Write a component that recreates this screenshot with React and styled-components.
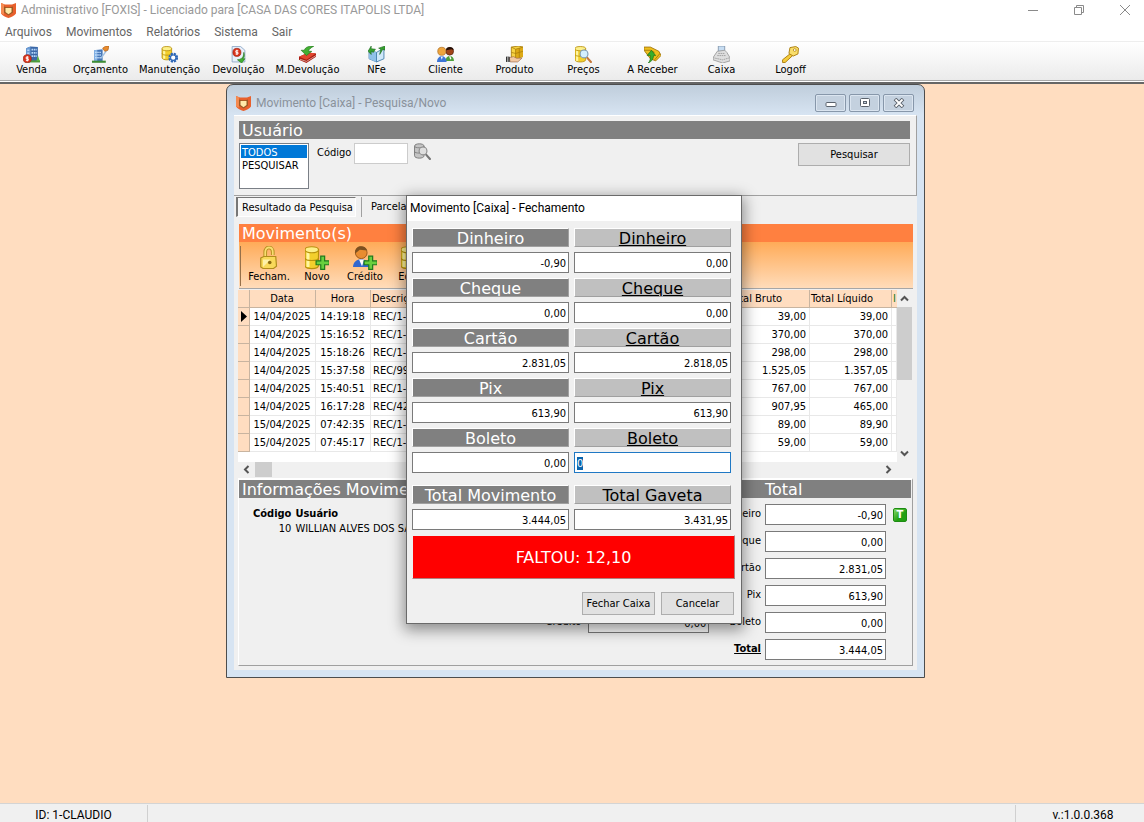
import React, { useEffect, useRef } from "react";
import styled, { createGlobalStyle, css } from "styled-components";

const Global = createGlobalStyle`
  *, *::before, *::after { box-sizing: border-box; }
  html, body { margin: 0; }
  body, button, input, select, table {
    font-family: "DejaVu Sans Condensed", "DejaVu Sans", sans-serif;
    font-stretch: condensed;
    font-size: 11px;
    line-height: 14px;
    color: #000;
  }
  button { padding: 0; margin: 0; border: 0; background: none; }
  svg { display: block; flex: none; }
`;

const segoe = css`
  font-family: Roboto, "Open Sans", sans-serif;
  font-stretch: normal;
  font-size: 12px;
  font-weight: 400;
`;

const verdana = css`
  font-family: "DejaVu Sans", sans-serif;
  font-stretch: normal;
  font-size: 16px;
  font-weight: 400;
`;

/* ---------- application frame ---------- */

const Frame = styled.div`
  min-height: 100vh;
  display: flex;
  flex-direction: column;
  background: #fff;
  overflow: hidden;
`;

const TitleBar = styled.header`
  display: flex;
  align-items: center;
  gap: 5px;
  height: 22px;
  padding: 0 12px 2px 1px;
`;

const AppTitle = styled.h1`
  ${segoe}
  flex: 1;
  margin: 0;
  line-height: 18px;
  color: #999;
  white-space: nowrap;
`;

const WindowButtons = styled.div`
  display: flex;
  gap: 32px;
`;

const PlainButton = styled.button`
  display: grid;
  place-items: center;
  width: 14px;
  height: 14px;
`;

const MenuBar = styled.nav`
  display: flex;
  gap: 14px;
  height: 19px;
  padding: 0 5px;
`;

const MenuItem = styled.button`
  ${segoe}
  line-height: 18px;
  color: #666;
`;

const Toolbar = styled.div`
  display: flex;
  height: 40px;
  padding-top: 4px;
  border-top: 1px solid #eee;
  border-bottom: 1px solid #aaa;
  background: linear-gradient(#fff, #ebebeb);
`;

const ToolbarItems = styled.div`
  display: flex;
  margin-left: -3px;
`;

const ToolButton = styled.button`
  display: flex;
  flex-direction: column;
  align-items: center;
  width: ${(p) => p.$width || 69}px;
  white-space: nowrap;
  line-height: 14px;
`;

const ToolbarEdge = styled.div`
  height: 3px;
  border-top: 1px solid #fff;
  border-bottom: 2px solid #666;
`;

const Desktop = styled.main`
  position: relative;
  flex: 1;
  min-height: 600px;
  background: #ffddc0;
`;

const StatusBar = styled.footer`
  display: flex;
  justify-content: space-between;
  height: 19px;
  border-top: 1px solid #d4d4d4;
  background: #f0f0f0;
`;

const StatusCell = styled.div`
  ${segoe}
  line-height: 20px;
  height: 17px;
  margin-top: 1px;
  text-align: center;
  width: ${(p) => p.$width}px;
  padding-left: ${(p) => (p.$end ? 6 : 0)}px;
  border: 0 solid #d0d0d0;
  border-width: ${(p) => (p.$end ? "0 0 0 1px" : "0 1px 0 0")};
`;

/* ---------- child window ---------- */

const ChildWindow = styled.section`
  position: absolute;
  left: 226px;
  top: 0;
  width: 699px;
  padding: 0 7px 7px;
  border: 1px solid #4d4d4d;
  border-radius: 7px 7px 0 0;
  background: linear-gradient(#bfcddb, #d7e4f2 30px);
`;

const ChildTitleBar = styled.div`
  display: flex;
  align-items: center;
  gap: 5px;
  height: 30px;
  padding: 6px 3px 0 2px;
`;

const ChildTitle = styled.h2`
  ${segoe}
  flex: 1;
  margin: 0;
  line-height: 18px;
  color: #8a929b;
`;

const ChildButtons = styled.div`
  display: flex;
  gap: 3px;
`;

const GlassButton = styled.button`
  display: grid;
  place-items: center;
  width: 31px;
  height: 18px;
  border: 1px solid #8797aa;
  border-radius: 2px;
  box-shadow: inset 0 0 0 1px #dbe5f0;
  background: #c4d1df;
`;

const ChildBody = styled.div`
  background: #f0f0f0;
  padding-bottom: 4px;
`;

const SearchPanel = styled.div`
  height: 81px;
  padding: 5px 6px 0 5px;
  border-top: 1px solid #fff;
  border-right: 1px solid #a0a0a0;
  border-bottom: 1px solid #a0a0a0;
`;

const SectionBar = styled.h3`
  ${verdana}
  flex: ${(p) => p.$flex || "none"};
  margin: 0;
  height: 18px;
  line-height: 19px;
  padding-left: ${(p) => p.$indent || 3}px;
  background: ${(p) => p.$color || "#808080"};
  color: #fff;
  white-space: nowrap;
  overflow: hidden;
`;

const SearchRow = styled.div`
  display: flex;
  align-items: flex-start;
  padding-top: 4px;
`;

const ListBox = styled.select`
  width: 70px;
  height: 46px;
  padding: 1px;
  border: 1px solid #7a7f86;
  border-radius: 0;
  background: #fff;
  overflow: hidden;
  outline: 0;
  option {
    height: 13px;
    min-height: 13px;
    padding: 1px 1px 0;
    line-height: 13px;
    color: #000;
  }
  option:checked {
    color: #fff;
    background: #0078d7 linear-gradient(#0078d7, #0078d7);
  }
`;

const FieldLabel = styled.label`
  padding: 3px 3px 0 8px;
`;

const CodeInput = styled.input`
  width: 54px;
  height: 21px;
  margin-right: 6px;
  border: 1px solid #ccc;
  background: #fff;
`;

const PushButton = styled.button`
  width: ${(p) => p.$width}px;
  height: 23px;
  padding-top: 1px;
  border: 1px solid #adadad;
  background: #e1e1e1;
  white-space: nowrap;
`;

const Spacer = styled.div`
  flex: 1;
`;

const Tabs = styled.div`
  display: flex;
  align-items: flex-start;
  height: 28px;
  padding: 1px 2px 0;
`;

const Tab = styled.button`
  height: 20px;
  padding: ${(p) => (p.$active ? "1px 2px 0 4px" : "0 0 0 9px")};
  margin-right: ${(p) => (p.$active ? 5 : 0)}px;
  border: solid;
  border-width: ${(p) => (p.$active ? "1px 1px 1px 2px" : "0 0 0 1px")};
  border-color: ${(p) => (p.$active ? "#777 #fff #fff #777" : "#a0a0a0")};
  background: ${(p) => (p.$active ? "#f7f7f7" : "none")};
`;

const MovesArea = styled.div`
  padding: 0 4px 0 5px;
`;

const OrangeToolbar = styled.div`
  display: flex;
  height: 47px;
  padding: 4px 0 0 1px;
  border-bottom: 1px solid #a6a6a6;
  background: linear-gradient(#ffab58, #ffdcba);
`;

const OrangeItems = styled.div`
  display: flex;
  padding-left: 4px;
  border-left: 1px solid #96704a;
  height: 40px;
`;

/* ---------- data grid ---------- */

const GridArea = styled.div`
  display: grid;
  grid-template-columns: 1fr 15px;
  padding: 1px 5px 0 4px;
`;

const GridView = styled.div`
  height: 172px;
  background: #fff;
  overflow: hidden;
`;

const DataTable = styled.table`
  width: 100%;
  table-layout: fixed;
  border-collapse: separate;
  border-spacing: 0;
  th {
    height: 18px;
    padding: 1px 1px 0;
    font-weight: 400;
    text-align: left;
    background: #ffddc0;
    border-right: 1px solid #c8b4a0;
    border-bottom: 1px solid #c8b4a0;
    white-space: nowrap;
    overflow: hidden;
  }
  th:last-child { color: #1c7a1c; border-right: 0; }
  td {
    height: 18px;
    padding: 1px 3px 0 2px;
    border-right: 1px solid #e8e8e8;
    border-bottom: 1px solid #e8e8e8;
    white-space: nowrap;
    overflow: hidden;
  }
  td:first-child {
    padding: 0 0 0 3px;
    background: #ffddc0;
    border-color: #c8b4a0;
  }
  th:nth-child(2), th:nth-child(3), td:nth-child(2), td:nth-child(3) {
    padding-left: 0;
    padding-right: 1px;
    text-align: center;
  }
  td:nth-child(5), td:nth-child(6) {
    text-align: right;
  }
`;

const ScrollTrack = styled.div`
  display: flex;
  flex-direction: ${(p) => (p.$vertical ? "column" : "row")};
  background: #f0f0f0;
`;

const ScrollArrow = styled.button`
  display: grid;
  place-items: center;
  width: ${(p) => (p.$vertical ? 15 : 17)}px;
  height: ${(p) => (p.$vertical ? 17 : 15)}px;
`;

const ScrollThumb = styled.div`
  width: ${(p) => (p.$vertical ? 15 : 17)}px;
  height: ${(p) => (p.$vertical ? 73 : 15)}px;
  background: #cdcdcd;
`;

/* ---------- information panel ---------- */

const InfoPanel = styled.div`
  margin: 1px 4px 0;
  border: 1px solid #fff;
  border-top-width: 2px;
  border-right-color: #a0a0a0;
  border-bottom-color: #a0a0a0;
`;

const InfoHeads = styled.div`
  display: flex;
  padding-right: 1px;
`;

const InfoBody = styled.div`
  display: flex;
  align-items: flex-start;
  padding: 6px 5px 5px 12px;
`;

const UserTable = styled.table`
  border-spacing: 0;
  margin-top: 3px;
  th, td { padding: 0 2px 1px; text-align: left; white-space: nowrap; }
  th { font-weight: 700; }
  td:first-child { text-align: right; }
`;

const FieldGrid = styled.div`
  display: grid;
  grid-template-columns: auto 121px;
  column-gap: ${(p) => p.$gap || 4}px;
  row-gap: 6px;
  align-self: ${(p) => p.$align || "auto"};
  margin-right: ${(p) => p.$after}px;
  margin-bottom: ${(p) => p.$below || 0}px;
  label { text-align: right; line-height: 20px; }
`;

const TotalLabel = styled.label`
  font-weight: 700;
  text-decoration: underline;
`;

const ValueInput = styled.input`
  width: 100%;
  height: 21px;
  padding: 1px 2px 0;
  border: 1px solid #7a7a7a;
  border-radius: 0;
  background: #fff;
  text-align: right;
  outline: 0;
  &:focus {
    border-color: #1f78c4;
    text-align: left;
  }
  &::selection {
    color: #fff;
    background: #0a64ad;
  }
`;

/* ---------- closing dialog ---------- */

const DialogBox = styled.section`
  position: absolute;
  left: 406px;
  top: 111px;
  width: 336px;
  border: 1px solid #6a6a6a;
  background: #f0f0f0;
  box-shadow: 0 4px 14px 2px rgba(0, 0, 0, 0.42);
`;

const DialogTitle = styled.h2`
  ${segoe}
  margin: 0;
  height: 25px;
  padding-left: 3px;
  background: #fff;
  line-height: 25px;
`;

const DialogBody = styled.div`
  padding: 7px 6px 8px 5px;
`;

const PairGrid = styled.div`
  display: grid;
  grid-template-columns: 157px 157px;
  gap: 5px;
  margin-bottom: ${(p) => p.$after}px;
`;

const HeadLabel = styled.label`
  ${verdana}
  line-height: 19px;
  height: 19px;
  text-align: center;
  overflow: hidden;
  border: 1px solid #fff;
  border-right-color: #a0a0a0;
  border-bottom-color: #a0a0a0;
  color: ${(p) => (p.$light ? "#000" : "#fff")};
  background: ${(p) => (p.$light ? "#c0c0c0" : "#808080")};
  text-decoration: ${(p) => (p.$underline ? "underline" : "none")};
`;

const Missing = styled.output`
  ${verdana}
  display: block;
  height: 44px;
  border: 1px solid #f0f0f0;
  border-right-color: #b08080;
  border-bottom-color: #b08080;
  background: #f00;
  color: #fff;
  text-align: center;
  line-height: 44px;
`;

const DialogActions = styled.div`
  display: flex;
  justify-content: flex-end;
  gap: 6px;
  padding: 13px 1px 0 0;
`;

/* ---------- drawings ---------- */

const Svg = ({ size = 17, children }) => (
  <svg width={size} height={size} viewBox="0 0 16 16" aria-hidden="true">
    {children}
  </svg>
);

const Logo = () => (
  <svg width="15" height="15" viewBox="0 0 15 15" aria-hidden="true">
    <path d="M0 0l4 1.500h7L15 0v10.500c-1.500 2-4.500 3.500-7.500 4.500C4.500 14 1.500 12.500 0 10.500z" fill="#e8602c" />
    <path d="M0 0l3 1.200v10.500L0 10.500z" fill="#f58a50" />
    <path d="M3 3.500l2.500.8h4l2.500-.8v6L7.500 12.500 3 9.500z" fill="#9a5a24" />
    <path d="M4.500 5h6v4l-3 2.200-3-2.200z" fill="#ffe9a8" />
  </svg>
);

const Cylinder = ({ x = 1, y = 0, w = 9, h = 13 }) => (
  <g stroke="#b8900c" strokeWidth=".8">
    <path d={`M${x} ${y + 2.5}v${h - 4.5}c0 2.700 ${w} 2.700 ${w} 0v-${h - 4.5}z`} fill="#f3cf2c" />
    <path d={`M${x + 2} ${y + 4}v${h - 5}`} stroke="#fff6a0" strokeWidth="2" />
    <ellipse cx={x + w / 2} cy={y + 2.5} rx={w / 2} ry="2" fill="#fdf08a" />
    <path d={`M${x} ${y + h / 2 + 0.5}c0 2.200 ${w} 2.200 ${w} 0`} fill="none" />
  </g>
);

const Building = () => (
  <g>
    <path d="M3 2l4-1.500L14 1v13H3z" fill="#3b68a8" />
    <path d="M3 2l4-1.500v14H3z" fill="#6b9bd4" />
    <path d="M4 4h2.500M4 7h2.500M4 10h2.500M8 3.500h5M8 6.500h5M8 9.500h5" stroke="#b5d6fa" strokeWidth="1.600" strokeDasharray="1.600 .6" />
    <path d="M2 14.500h14" stroke="#4d9b3a" strokeWidth="2" />
    <path d="M14 9l1.800 5h-3z" fill="#5cb33f" />
  </g>
);

const Coin = ({ x, y }) => (
  <g>
    <circle cx={x} cy={y} r="3.800" fill="#d9341c" stroke="#99200f" strokeWidth=".6" />
    <path d={`M${x + 1.3} ${y - 1.5}h-2.300v1.500h2v1.500h-2.300M${x} ${y - 2.5}v5`} stroke="#fff" strokeWidth=".9" fill="none" />
  </g>
);

const Plus = () => (
  <path d="M10.500 6.800h2.600v3.100H16.200v2.600h-3.100v3.100h-2.600v-3.100H7.400V9.900h3.100z" fill="#69cf3e" stroke="#1e7a1c" strokeWidth=".8" />
);

const Lens = ({ gray }) => (
  <g>
    <path d="M11 10.500l4 4.500" stroke={gray ? "#777" : "#c4783a"} strokeWidth="2" strokeLinecap="round" />
    <circle cx="8.500" cy="7.500" r="3.700" fill={gray ? "#dedede" : "#d3efff"} stroke={gray ? "#888" : "#7896b4"} />
  </g>
);

const icons = {
  venda: <><Building /><Coin x={4} y={12} /></>,
  orcamento: (
    <>
      <path d="M2 4l8-1v11H2z" fill="#4677b8" />
      <path d="M2 4l3-.4V14H2z" fill="#86b4e6" />
      <path d="M3 6h6M3 8.500h6M3 11h6" stroke="#cfe6ff" strokeWidth="1.300" strokeDasharray="1.300 .7" />
      <path d="M8 11l5-7 1 1-5 7z" fill="#9fc0e2" />
      <path d="M10 2l3-2h3l-1 4-3 1z" fill="#e88b2e" stroke="#a85a15" strokeWidth=".6" />
      <path d="M0 14.800h13" stroke="#3e8c35" strokeWidth="2" />
    </>
  ),
  manutencao: (
    <>
      <Cylinder x={1} />
      <circle cx="11.500" cy="11" r="3.500" fill="#eaf4ff" stroke="#2b65b5" strokeWidth="2.200" strokeDasharray="2 .75" />
      <circle cx="11.500" cy="11" r="2.500" fill="#fff" stroke="#2b65b5" />
    </>
  ),
  devolucao: (
    <>
      <path d="M2 .5h8l4 3.500v11H2z" fill="#e8f0fa" stroke="#8aa4c4" strokeWidth=".8" />
      <Coin x={6.5} y={6} />
      <path d="M13 6c1 4 0 5-1 6l2 0-3 4-4-3 2-.4c3-1 4-3 4-6.600z" fill="#42b032" stroke="#1f7518" strokeWidth=".6" />
    </>
  ),
  mdevolucao: (
    <>
      <path d="M0 10l9-4 7 1v3l-9 6-7-3z" fill="#a81a12" />
      <path d="M0 10l9-4 7 1-9 6z" fill="#e2462e" />
      <path d="M1 12.500l6 2 9-5.500" stroke="#e9c9b8" strokeWidth=".7" fill="none" />
      <path d="M14 0c-5 0-8 1-9 4H2l5 5 5-4H9c0-2 2-3 5-5z" fill="#42b032" stroke="#1f7518" strokeWidth=".6" />
    </>
  ),
  nfe: (
    <>
      <path d="M1 4l7 2 7-4v10l-7 3-7-3z" fill="#cfe8fa" stroke="#3c78a8" strokeWidth=".8" />
      <path d="M1 4l7 2v9l-7-3z" fill="#8fc1ea" />
      <path d="M8 6v9" stroke="#3c78a8" strokeWidth=".8" />
      <path d="M0 5l3-5v2.500l4 .5-2 3-2-1v3zM16 0v4l-2-1-3 5 1-5-2-1z" fill="#36a030" stroke="#176217" strokeWidth=".5" />
    </>
  ),
  cliente: (
    <>
      <circle cx="12" cy="5" r="3.600" fill="#a24418" stroke="#4a1c0a" strokeWidth=".6" />
      <path d="M8.500 4c0-4 7-4 7.200 0l-2-1z" fill="#241008" />
      <path d="M8 14c0-6 8-6 8 0z" fill="#4c9f3a" />
      <path d="M12 9.500l1 3" stroke="#fff" strokeWidth="1.200" />
      <circle cx="4.500" cy="5" r="3.800" fill="#eea53e" stroke="#a3651a" strokeWidth=".6" />
      <path d="M0 15c0-7 9-7 9 0z" fill="#3d76d6" />
      <path d="M3.500 10l1 3 1-3z" fill="#fff" />
    </>
  ),
  produto: (
    <>
      <path d="M5 1l7-1 4 1v9l-7 2-4-1z" fill="#f6d344" stroke="#a87c0a" strokeWidth=".8" />
      <path d="M9 3l7-2v9l-7 2z" fill="#dda915" />
      <path d="M5 1l4 2 7-2M9 3v9M5 6l4 1 7-2M12.500 2v9" stroke="#a87c0a" strokeWidth=".7" fill="none" />
      <path d="M3 11l4-1 3 1.500h5L11 15H4z" fill="#f3c9a3" stroke="#99674a" strokeWidth=".6" />
      <path d="M0 10h3.500v5H0z" fill="#333" />
      <path d="M1.700 10v5" stroke="#fff" strokeWidth=".7" />
    </>
  ),
  precos: <><Cylinder x={0} w={10} h={15} /><Lens /></>,
  areceber: (
    <>
      <path d="M0 1l6 0 8 4 2 4-5 5-5-2-6-8z" fill="#eebf1e" stroke="#a07409" strokeWidth=".8" />
      <path d="M0 4l6 0 4 2M3 8l6-2M10 13l5-6" stroke="#a07409" strokeWidth=".8" fill="none" />
      <path d="M7 4l4 5H9c0 3-2 6-5 7 2-2 2-4 2-7H3z" fill="#37ae2c" stroke="#176f12" strokeWidth=".6" />
    </>
  ),
  caixa: (
    <>
      <path d="M5 0h6v5H5z" fill="#c7ddf2" stroke="#7e93aa" strokeWidth=".8" />
      <path d="M4 5l7-1 2 2 3 5v3l-7 2-9-3v-2z" fill="#dedede" stroke="#999" strokeWidth=".8" />
      <path d="M0 11l9 2 7-2M5 7h6M4 9h8" stroke="#999" strokeWidth=".8" fill="none" strokeDasharray="1.500 .6" />
    </>
  ),
  logoff: (
    <>
      <path d="M8 7l2 2-7 6.500H.5V13z" fill="#f5cc3c" stroke="#ad8010" strokeWidth=".9" />
      <path d="M7.500 1.500L13 .5l2.500 1.500-.5 5.500L10.500 9.500 6.500 7z" fill="#f9de6a" stroke="#ad8010" strokeWidth=".9" />
      <circle cx="12" cy="3.800" r="1.300" fill="#fff" stroke="#ad8010" strokeWidth=".7" />
    </>
  ),
  fecham: (
    <>
      <path d="M5.500 8V4c0-4 5-4 5 0v2" fill="none" stroke="#b08c1c" strokeWidth="2.400" />
      <path d="M5.500 8V4c0-4 5-4 5 0v2" fill="none" stroke="#f8dd70" strokeWidth="1.200" />
      <path d="M2.500 8l2-1 8 0 .5 6.500-2 1.500H4l-1.500-1z" fill="#f8d95a" stroke="#b08c1c" strokeWidth=".8" />
      <path d="M4 9v5l5-5z" fill="#fdf0a8" />
      <circle cx="8.500" cy="11" r="1.200" fill="#8a6a10" />
    </>
  ),
  novo: <><Cylinder x={0} w={9} h={15} /><Plus /></>,
  credito: (
    <>
      <circle cx="5.500" cy="4.500" r="3.900" fill="#e88c30" stroke="#96551a" strokeWidth=".6" />
      <path d="M1.500 5c-1-6 7-6 8-2l-5-.5z" fill="#7c5020" />
      <path d="M0 14c0-7 11-7 11 0z" fill="#3267cf" />
      <path d="M4 9l2 4.500L7.500 9z" fill="#fff" />
      <Plus />
    </>
  ),
  busca: (
    <>
      <path d="M.5 3c0-3 9-3 9 0v9c0 3-9 3-9 0z" fill="#c4c4c4" stroke="#7c7c7c" strokeWidth=".9" />
      <path d="M.5 3c0 2 9 2 9 0M.5 8c0 2 9 2 9 0" stroke="#7c7c7c" strokeWidth=".8" fill="none" />
      <Lens gray />
    </>
  ),
};

const Line = ({ d, size = 12, color = "#8a8a8a", width = 1 }) => (
  <svg width={size} height={size} viewBox={`0 0 ${size} ${size}`} aria-hidden="true">
    <path d={d} fill="none" stroke={color} strokeWidth={width} />
  </svg>
);

const Badge = styled.span`
  display: grid;
  place-items: center;
  width: 14px;
  height: 14px;
  margin-top: 4px;
  border: 1px solid #1d8c12;
  border-radius: 2px;
  background: linear-gradient(135deg, #8ada6c, #22a012 60%);
  color: #fff;
  font-weight: 700;
  font-size: 11px;
  line-height: 12px;
`;

/* ---------- data ---------- */

const menus = ["Arquivos", "Movimentos", "Relatórios", "Sistema", "Sair"];

const tools = [
  ["venda", "Venda"],
  ["orcamento", "Orçamento"],
  ["manutencao", "Manutenção"],
  ["devolucao", "Devolução"],
  ["mdevolucao", "M.Devolução"],
  ["nfe", "NFe"],
  ["cliente", "Cliente"],
  ["produto", "Produto"],
  ["precos", "Preços"],
  ["areceber", "A Receber"],
  ["caixa", "Caixa"],
  ["logoff", "Logoff"],
];

const moves = [
  ["14/04/2025", "14:19:18", "REC/1-1", "39,00", "39,00"],
  ["14/04/2025", "15:16:52", "REC/1-1", "370,00", "370,00"],
  ["14/04/2025", "15:18:26", "REC/1-1", "298,00", "298,00"],
  ["14/04/2025", "15:37:58", "REC/99", "1.525,05", "1.357,05"],
  ["14/04/2025", "15:40:51", "REC/1-1", "767,00", "767,00"],
  ["14/04/2025", "16:17:28", "REC/42", "907,95", "465,00"],
  ["15/04/2025", "07:42:35", "REC/1-1", "89,00", "89,90"],
  ["15/04/2025", "07:45:17", "REC/1-1", "59,00", "59,00"],
];

const totals = [
  ["Dinheiro", "-0,90"],
  ["Cheque", "0,00"],
  ["Cartão", "2.831,05"],
  ["Pix", "613,90"],
  ["Boleto", "0,00"],
];

const pairs = [
  ["Dinheiro", "-0,90", "0,00"],
  ["Cheque", "0,00", "0,00"],
  ["Cartão", "2.831,05", "2.818,05"],
  ["Pix", "613,90", "613,90"],
  ["Boleto", "0,00", "0"],
];

/* ---------- parts ---------- */

function Moves() {
  return (
    <GridArea>
      <GridView>
        <DataTable>
          <colgroup>
            <col style={{ width: 12 }} />
            <col style={{ width: 66 }} />
            <col style={{ width: 55 }} />
            <col />
            <col style={{ width: 82 }} />
            <col style={{ width: 82 }} />
            <col style={{ width: 5 }} />
          </colgroup>
          <thead>
            <tr>
              <th />
              <th>Data</th>
              <th>Hora</th>
              <th>Descrição</th>
              <th>Total Bruto</th>
              <th>Total Líquido</th>
              <th>I</th>
            </tr>
          </thead>
          <tbody>
            {moves.map((row, i) => (
              <tr key={row[1]}>
                <td>
                  {i === 0 && (
                    <svg width="6" height="11" viewBox="0 0 6 11" aria-hidden="true">
                      <path d="M0 0l6 5.500L0 11z" />
                    </svg>
                  )}
                </td>
                {row.map((cell, c) => (
                  <td key={c}>{cell}</td>
                ))}
                <td />
              </tr>
            ))}
          </tbody>
        </DataTable>
      </GridView>
      <ScrollTrack $vertical>
        <ScrollArrow $vertical aria-label="Rolar para cima">
          <Line size={9} d="M1 6.500l3.500-3.500L8 6.500" color="#555" width={2} />
        </ScrollArrow>
        <ScrollThumb $vertical />
        <Spacer />
        <ScrollArrow $vertical aria-label="Rolar para baixo">
          <Line size={9} d="M1 2.500L4.500 6 8 2.500" color="#555" width={2} />
        </ScrollArrow>
      </ScrollTrack>
      <ScrollTrack>
        <ScrollArrow aria-label="Rolar para a esquerda">
          <Line size={9} d="M6.500 1L3 4.500 6.500 8" color="#555" width={2} />
        </ScrollArrow>
        <ScrollThumb />
        <Spacer />
        <ScrollArrow aria-label="Rolar para a direita">
          <Line size={9} d="M2.500 1L6 4.500 2.500 8" color="#555" width={2} />
        </ScrollArrow>
      </ScrollTrack>
    </GridArea>
  );
}

function Info() {
  return (
    <InfoPanel>
      <InfoHeads>
        <SectionBar $flex="1">Informações Movimento</SectionBar>
        <SectionBar $flex="0 0 182px" $indent={36}>Total</SectionBar>
      </InfoHeads>
      <InfoBody>
        <UserTable>
          <thead>
            <tr><th>Código</th><th>Usuário</th></tr>
          </thead>
          <tbody>
            <tr><td>10</td><td>WILLIAN ALVES DOS SA</td></tr>
          </tbody>
        </UserTable>
        <Spacer />
        <FieldGrid $gap={7} $after={10} $below={27} $align="flex-end">
          <label htmlFor="credito">Crédito</label>
          <ValueInput id="credito" readOnly value="0,00" />
        </FieldGrid>
        <FieldGrid $after={7}>
          {totals.map(([name, value]) => (
            <React.Fragment key={name}>
              <label htmlFor={`t-${name}`}>{name}</label>
              <ValueInput id={`t-${name}`} readOnly value={value} />
            </React.Fragment>
          ))}
          <TotalLabel htmlFor="t-total">Total</TotalLabel>
          <ValueInput id="t-total" readOnly value="3.444,05" />
        </FieldGrid>
        <Badge>T</Badge>
      </InfoBody>
    </InfoPanel>
  );
}

function ClosingDialog() {
  const active = useRef(null);
  useEffect(() => {
    active.current.focus();
    active.current.select();
  }, []);
  return (
    <DialogBox role="dialog" aria-labelledby="dlg-title">
      <DialogTitle id="dlg-title">Movimento [Caixa] - Fechamento</DialogTitle>
      <DialogBody>
        {pairs.map(([name, moved, drawer], i) => (
          <PairGrid key={name} $after={i === pairs.length - 1 ? 12 : 5}>
            <HeadLabel htmlFor={`m-${name}`}>{name}</HeadLabel>
            <HeadLabel $light $underline htmlFor={`g-${name}`}>{name}</HeadLabel>
            <ValueInput id={`m-${name}`} readOnly value={moved} />
            <ValueInput
              id={`g-${name}`}
              defaultValue={drawer}
              ref={name === "Boleto" ? active : undefined}
            />
          </PairGrid>
        ))}
        <PairGrid $after={5}>
          <HeadLabel htmlFor="m-total">Total Movimento</HeadLabel>
          <HeadLabel $light htmlFor="g-total">Total Gaveta</HeadLabel>
          <ValueInput id="m-total" readOnly value="3.444,05" />
          <ValueInput id="g-total" readOnly value="3.431,95" />
        </PairGrid>
        <Missing>FALTOU: 12,10</Missing>
        <DialogActions>
          <PushButton $width={73}>Fechar Caixa</PushButton>
          <PushButton $width={73}>Cancelar</PushButton>
        </DialogActions>
      </DialogBody>
    </DialogBox>
  );
}

export default function App() {
  return (
    <Frame>
      <Global />
      <TitleBar>
        <Logo />
        <AppTitle>Administrativo [FOXIS] - Licenciado para [CASA DAS CORES ITAPOLIS LTDA]</AppTitle>
        <WindowButtons>
          <PlainButton aria-label="Minimizar"><Line d="M1 6.500h10" /></PlainButton>
          <PlainButton aria-label="Restaurar"><Line d="M1.500 3.500h7v7h-7zM3.500 3.500v-2h7v7h-2" /></PlainButton>
          <PlainButton aria-label="Fechar"><Line d="M1 1l10 10M11 1L1 11" /></PlainButton>
        </WindowButtons>
      </TitleBar>
      <MenuBar>
        {menus.map((m) => <MenuItem key={m}>{m}</MenuItem>)}
      </MenuBar>
      <Toolbar>
        <ToolbarItems>
          {tools.map(([icon, label]) => (
            <ToolButton key={label}>
              <Svg>{icons[icon]}</Svg>
              {label}
            </ToolButton>
          ))}
        </ToolbarItems>
      </Toolbar>
      <ToolbarEdge />
      <Desktop>
        <ChildWindow aria-labelledby="child-title">
          <ChildTitleBar>
            <Logo />
            <ChildTitle id="child-title">Movimento [Caixa] - Pesquisa/Novo</ChildTitle>
            <ChildButtons>
              <GlassButton aria-label="Minimizar janela">
                <svg width="12" height="10" viewBox="0 0 12 10"><rect x="1" y="4.500" width="10" height="4" rx="1" fill="#fff" stroke="#5a626c" /></svg>
              </GlassButton>
              <GlassButton aria-label="Maximizar janela">
                <svg width="12" height="10" viewBox="0 0 12 10"><rect x="1.500" y=".5" width="9" height="8" rx="1" fill="#fff" stroke="#5a626c" /><rect x="4.500" y="3.500" width="3" height="2" fill="#c4d1df" stroke="#5a626c" /></svg>
              </GlassButton>
              <GlassButton aria-label="Fechar janela">
                <svg width="12" height="10" viewBox="0 0 12 10"><path d="M2 1l8 8M10 1L2 9" stroke="#5a626c" strokeWidth="3.800" /><path d="M2.500 1.500l7 7M9.500 1.500l-7 7" stroke="#fff" strokeWidth="1.800" /></svg>
              </GlassButton>
            </ChildButtons>
          </ChildTitleBar>
          <ChildBody>
            <SearchPanel>
              <SectionBar>Usuário</SectionBar>
              <SearchRow>
                <ListBox size={3} defaultValue="TODOS" aria-label="Usuário">
                  <option>TODOS</option>
                  <option>PESQUISAR</option>
                </ListBox>
                <FieldLabel htmlFor="codigo">Código</FieldLabel>
                <CodeInput id="codigo" />
                <PlainButton aria-label="Buscar usuário"><Svg>{icons.busca}</Svg></PlainButton>
                <Spacer />
                <PushButton $width={112}>Pesquisar</PushButton>
              </SearchRow>
            </SearchPanel>
            <Tabs role="tablist">
              <Tab role="tab" aria-selected="true" $active>Resultado da Pesquisa</Tab>
              <Tab role="tab" aria-selected="false">Parcela</Tab>
            </Tabs>
            <MovesArea>
              <SectionBar $color="#ff8040">Movimento(s)</SectionBar>
              <OrangeToolbar>
                <OrangeItems>
                  <ToolButton $width={48}><Svg size={24}>{icons.fecham}</Svg>Fecham.</ToolButton>
                  <ToolButton $width={48}><Svg size={24}>{icons.novo}</Svg>Novo</ToolButton>
                  <ToolButton $width={48}><Svg size={24}>{icons.credito}</Svg>Crédito</ToolButton>
                  <ToolButton $width={48}><Svg size={24}>{icons.novo}</Svg>Editar</ToolButton>
                </OrangeItems>
              </OrangeToolbar>
            </MovesArea>
            <Moves />
            <Info />
          </ChildBody>
        </ChildWindow>
        <ClosingDialog />
      </Desktop>
      <StatusBar>
        <StatusCell $width={148}>ID: 1-CLAUDIO</StatusCell>
        <StatusCell $width={129} $end>v.:1.0.0.368</StatusCell>
      </StatusBar>
    </Frame>
  );
}
